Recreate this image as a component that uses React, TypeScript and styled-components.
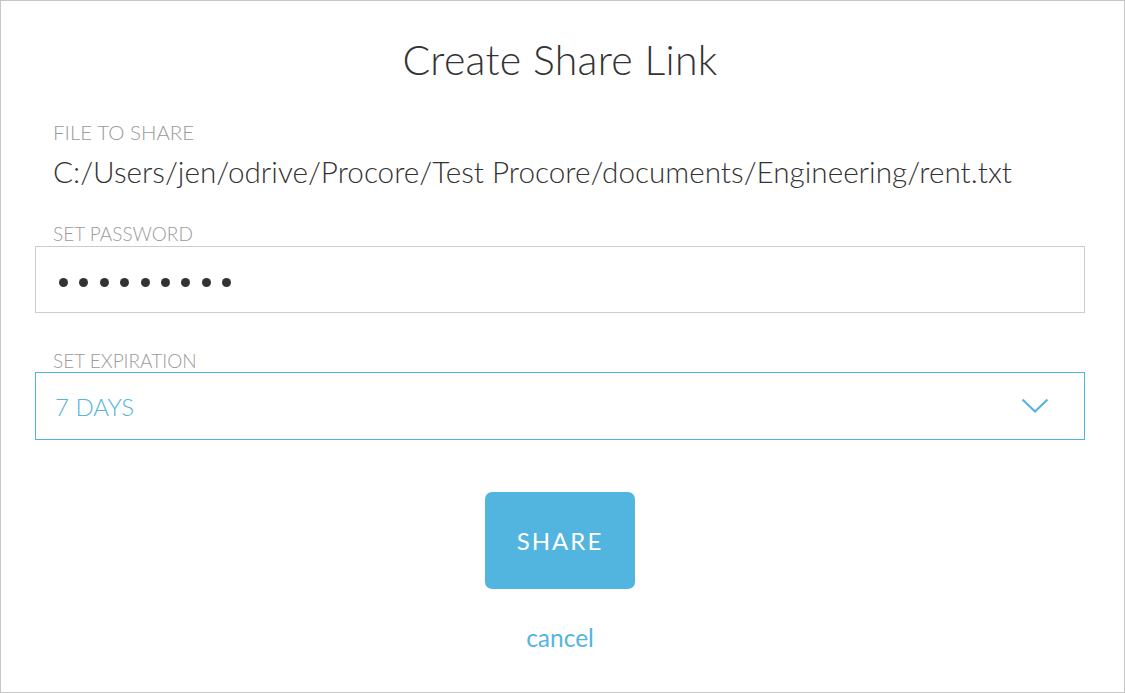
import React from "react";
import styled, { createGlobalStyle } from "styled-components";

const Global = createGlobalStyle`
  html, body { margin: 0; padding: 0; background: #ffffff; }
  * { box-sizing: border-box; }
`;

const Frame = styled.div`
  width: 1125px;
  height: 693px;
  border: 1px solid #c6c6c6;
  background: #ffffff;
  padding: 34px 39px 0 34px;
  display: flex;
  flex-direction: column;
  font-family: Lato, "Open Sans", sans-serif;
  color: #333333;
`;

const Title = styled.h1`
  margin: 0;
  font-size: 41px;
  line-height: 49px;
  font-weight: 300;
  letter-spacing: 0.3px;
  text-align: center;
  color: #333333;
`;

const Field = styled.div<{ $top: number }>`
  display: flex;
  flex-direction: column;
  margin-top: ${(p) => p.$top}px;
`;

const Label = styled.label<{ $gap: number; $size?: number }>`
  display: block;
  padding-left: 18px;
  font-size: ${(p) => p.$size ?? 19}px;
  line-height: ${(p) => (p.$size ? 25 : 23)}px;
  font-weight: 300;
  color: #9a9a9a;
  text-transform: uppercase;
  margin-bottom: ${(p) => p.$gap}px;
`;

const PathText = styled.div`
  padding-left: 18px;
  font-size: 29.7px;
  line-height: 36px;
  font-weight: 300;
  color: #333333;
  white-space: nowrap;
`;

const InputBox = styled.div`
  height: 67px;
  border: 1px solid #cccccc;
  display: flex;
  align-items: center;
  padding: 6px 0 0 23px;
  gap: 11.4px;
`;

const Dot = styled.span`
  width: 9px;
  height: 9px;
  border-radius: 50%;
  background: #333333;
  flex: none;
`;

const SelectBox = styled.div`
  height: 68px;
  border: 1px solid #4fb3dd;
  display: flex;
  align-items: center;
  justify-content: space-between;
  padding: 2px 35px 0 19px;
`;

const SelectText = styled.span`
  font-size: 24px;
  line-height: 32px;
  font-weight: 300;
  color: #56b4e0;
`;

const Chevron = styled.svg`
  width: 28px;
  height: 16px;
  display: block;
  margin-top: -2px;
`;

const Actions = styled.div`
  display: flex;
  flex-direction: column;
  align-items: center;
  margin-top: 52px;
`;

const ShareButton = styled.button`
  width: 150px;
  height: 97px;
  border: none;
  border-radius: 7px;
  background: #52b5e0;
  color: #ffffff;
  font-family: Lato, "Open Sans", sans-serif;
  font-size: 24px;
  font-weight: 400;
  letter-spacing: 2px;
  padding: 0;
  cursor: pointer;
`;

const CancelLink = styled.a`
  margin-top: 34px;
  font-size: 24.5px;
  line-height: 29px;
  font-weight: 400;
  color: #52b5e0;
  text-decoration: none;
  cursor: pointer;
`;

export default function App() {
  const password = "secretpwd";
  return (
    <>
      <Global />
      <Frame>
        <Title>Create Share Link</Title>
        <Field $top={36}>
          <Label $gap={9} $size={20.5}>File to share</Label>
          <PathText>C:/Users/jen/odrive/Procore/Test Procore/documents/Engineering/rent.txt</PathText>
        </Field>
        <Field $top={32}>
          <Label $gap={1}>Set password</Label>
          <InputBox aria-label="password">
            {password.split("").map((_, i) => (
              <Dot key={i} />
            ))}
          </InputBox>
        </Field>
        <Field $top={36}>
          <Label $gap={0}>Set expiration</Label>
          <SelectBox>
            <SelectText>7 DAYS</SelectText>
            <Chevron viewBox="0 0 28 16">
              <polyline points="1.5,1.5 14,13.5 26.5,1.5" fill="none" stroke="#56b4e0" strokeWidth="2.2" />
            </Chevron>
          </SelectBox>
        </Field>
        <Actions>
          <ShareButton>SHARE</ShareButton>
          <CancelLink>cancel</CancelLink>
        </Actions>
      </Frame>
    </>
  );
}
